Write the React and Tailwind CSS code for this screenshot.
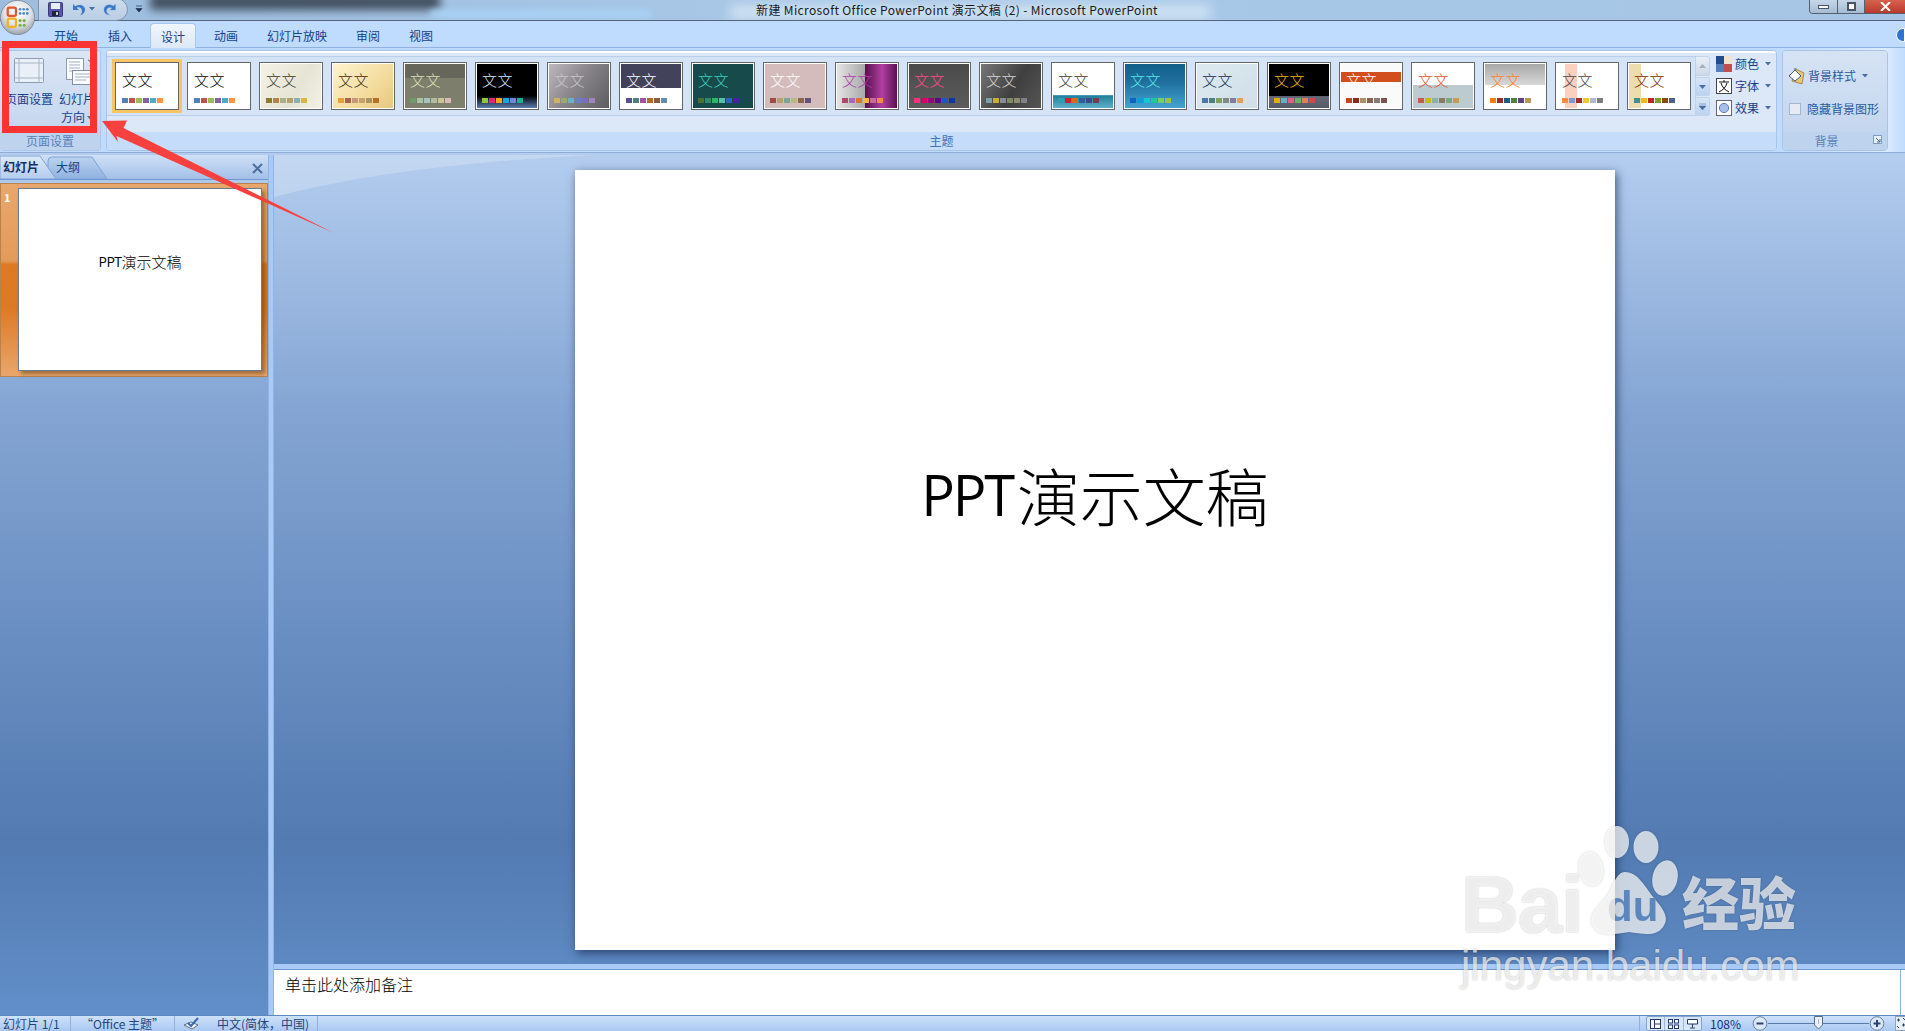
import React from "react";

const themes = [
  { bg: "bg-white", text: "text-black", sw: ["bg-[#4f81bd]", "bg-[#c0504d]", "bg-[#9bbb59]", "bg-[#8064a2]", "bg-[#4bacc6]", "bg-[#f79646]"], sel: true },
  { bg: "bg-white", text: "text-black", sw: ["bg-[#4f81bd]", "bg-[#c0504d]", "bg-[#9bbb59]", "bg-[#8064a2]", "bg-[#4bacc6]", "bg-[#f79646]"] },
  { bg: "bg-[linear-gradient(120deg,#f4f2e6_0%,#e6e4d4_60%,#f3f1e6_100%)]", text: "text-[#3a3a2a]", sw: ["bg-[#8b7d2c]", "bg-[#b5824e]", "bg-[#a9b083]", "bg-[#b3a06e]", "bg-[#8daeb5]", "bg-[#d8b54c]"] },
  { bg: "bg-[linear-gradient(135deg,#fdf3cf_0%,#f3dc9e_60%,#e9c680_100%)]", text: "text-[#3a2a10]", sw: ["bg-[#e8a12f]", "bg-[#a5644a]", "bg-[#c49a7a]", "bg-[#c9a06a]", "bg-[#a89560]", "bg-[#b87029]"] },
  { bg: "bg-[linear-gradient(180deg,#66665a_0%,#66665a_32%,#7e7e6c_32%,#7e7e6c_100%)]", text: "text-[#dfe3b7]", sw: ["bg-[#6f9a6c]", "bg-[#a8c4a2]", "bg-[#a5c4c0]", "bg-[#b5b9a0]", "bg-[#c9c494]", "bg-[#d9b8b8]"] },
  { bg: "bg-[linear-gradient(180deg,#000000_0%,#000000_72%,#5a7ab0_100%)]", text: "text-[#d5efff]", sw: ["bg-[#8dc63f]", "bg-[#e0277b]", "bg-[#f0a818]", "bg-[#1aa7d8]", "bg-[#6e86d6]", "bg-[#1fae8f]"] },
  { bg: "bg-[linear-gradient(125deg,#bdb8bc_0%,#8a878c_45%,#5e5c60_100%)]", text: "text-[#c9c5cc]", sw: ["bg-[#cdb35a]", "bg-[#9daa6a]", "bg-[#6fb0c8]", "bg-[#6880bf]", "bg-[#7a6ec0]", "bg-[#a084c0]"] },
  { bg: "bg-[linear-gradient(180deg,#42425a_0%,#42425a_55%,#ffffff_55%,#ffffff_100%)]", text: "text-white", sw: ["bg-[#59518e]", "bg-[#4e7f7f]", "bg-[#a5519c]", "bg-[#b56b2c]", "bg-[#8a5d3c]", "bg-[#5f8fb0]"] },
  { bg: "bg-[#174a4a]", text: "text-[#3fd1c0]", sw: ["bg-[#4b7030]", "bg-[#2f8a66]", "bg-[#2fb568]", "bg-[#4fc0b0]", "bg-[#2f63c0]", "bg-[#4a209f]"] },
  { bg: "bg-[#d5bcbc]", text: "text-white", sw: ["bg-[#a04a48]", "bg-[#b8a06a]", "bg-[#7ea49a]", "bg-[#b8b880]", "bg-[#8c6648]", "bg-[#644f80]"] },
  { bg: "bg-[linear-gradient(90deg,#e4e4e4_0%,#a8a8a8_47%,#5a1050_47.5%,#b040a0_75%,#5a1050_100%)]", text: "text-[#b03aa8]", sw: ["bg-[#b8446c]", "bg-[#a668ba]", "bg-[#d97330]", "bg-[#fab24a]", "bg-[#c86aa0]", "bg-[#f08c4a]"] },
  { bg: "bg-[linear-gradient(180deg,#4a4a4a_0%,#5c5c5c_100%)]", text: "text-[#ff4a88]", sw: ["bg-[#ff2f80]", "bg-[#d4006a]", "bg-[#9a0080]", "bg-[#62008a]", "bg-[#1a5ac0]", "bg-[#0a3aa0]"] },
  { bg: "bg-[linear-gradient(120deg,#777777_0%,#3f3f3f_55%,#555555_100%)]", text: "text-[#d8d8d8]", sw: ["bg-[#7aa0aa]", "bg-[#c8ad2e]", "bg-[#8a8a9c]", "bg-[#7e8a62]", "bg-[#8c8c6e]", "bg-[#808088]"] },
  { bg: "bg-[linear-gradient(180deg,#ffffff_0%,#ffffff_70%,#1f7f9a_72%,#5fb0c8_100%)]", text: "text-[#3a3a2a]", sw: ["bg-[#2e9fb0]", "bg-[#c8232c]", "bg-[#d96a1a]", "bg-[#2f5f9a]", "bg-[#3c4a8a]", "bg-[#7a3a50]"] },
  { bg: "bg-[linear-gradient(180deg,#135f8c_0%,#1d6f9d_40%,#46a3d0_100%)]", text: "text-[#5fe6e6]", sw: ["bg-[#0a66c2]", "bg-[#0f9ad8]", "bg-[#10c8d8]", "bg-[#1cc8a0]", "bg-[#7ccc66]", "bg-[#a0c040]"] },
  { bg: "bg-[linear-gradient(135deg,#dde9ef_0%,#cfdfe8_100%)]", text: "text-[#102a50]", sw: ["bg-[#4a78a8]", "bg-[#4f7d80]", "bg-[#7fa060]", "bg-[#808a88]", "bg-[#8a78a0]", "bg-[#e0a060]"] },
  { bg: "bg-[linear-gradient(180deg,#000000_0%,#000000_72%,#666a78_74%,#555a68_100%)]", text: "text-[#f5b800]", sw: ["bg-[#e8a90a]", "bg-[#5fb0c8]", "bg-[#e0607f]", "bg-[#62b06a]", "bg-[#e08050]", "bg-[#c84a4a]"] },
  { bg: "bg-[linear-gradient(180deg,#fafafa_0%,#fafafa_18%,#d24e1c_18%,#d24e1c_42%,#fafafa_42%,#fafafa_100%)]", text: "text-white", sw: ["bg-[#c04a1c]", "bg-[#8a2a1c]", "bg-[#a89068]", "bg-[#8a6250]", "bg-[#8a7a78]", "bg-[#7a5550]"] },
  { bg: "bg-[linear-gradient(180deg,#ffffff_0%,#ffffff_48%,#bccbcf_48%,#bccbcf_100%)]", text: "text-[#e05030]", sw: ["bg-[#c85a48]", "bg-[#c8b818]", "bg-[#8ab0a8]", "bg-[#8a7a68]", "bg-[#7aa878]", "bg-[#c89a58]"] },
  { bg: "bg-[linear-gradient(180deg,#a8a8a8_0%,#d8d8d8_48%,#ffffff_48%,#ffffff_100%)]", text: "text-[#ff7f2a]", sw: ["bg-[#ee7f10]", "bg-[#9a2a2a]", "bg-[#1f5a7f]", "bg-[#4f8040]", "bg-[#5f4080]", "bg-[#b89858]"] },
  { bg: "bg-[linear-gradient(90deg,#ffffff_0%,#ffffff_13%,#fbd0c0_13%,#fbd0c0_34%,#ffffff_34%,#ffffff_100%)]", text: "text-[#444444]", sw: ["bg-[#ff8a3c]", "bg-[#7a9ad0]", "bg-[#a82a20]", "bg-[#f0c830]", "bg-[#b0b8d0]", "bg-[#7f7f7f]"] },
  { bg: "bg-[linear-gradient(90deg,#ecdcae_0%,#ecdcae_20%,#ffffff_20%,#ffffff_100%)]", text: "text-[#7a2a00]", sw: ["bg-[#3f8f9a]", "bg-[#f0b818]", "bg-[#b82a2a]", "bg-[#82a030]", "bg-[#8a4a08]", "bg-[#4f5f8a]"] },
];

function ThemeThumb({ t }) {
  return (
    <div className={`relative w-[64px] h-[48px] shrink-0 border border-[#666666] bg-white p-px ${t.sel ? "ring-[3px] ring-[#f7c566]" : ""}`}>
      <div className={`relative w-full h-full overflow-hidden ${t.bg}`}>
        <div className={`absolute left-[5px] top-[7px] text-[15px] leading-[18px] tracking-[0.5px] font-light whitespace-nowrap ${t.text}`}>文文</div>
        <div className="absolute left-[5px] top-[34px] flex gap-px">
          {t.sw.map((c, i) => (
            <div key={i} className={`w-[6px] h-[5px] ${c}`} />
          ))}
        </div>
      </div>
    </div>
  );
}

function Caret({ className = "" }) {
  return (
    <svg width="6" height="4" viewBox="0 0 6 4" className={className}>
      <path d="M0 0H6L3 3.5Z" fill="#4a6fa5" />
    </svg>
  );
}

function ScrollBtn({ h, children, top }) {
  return (
    <div className={`w-[15px] ${h} flex items-center justify-center border border-[#c2d4ec] rounded-[2px] ${top ? "bg-[linear-gradient(180deg,#e8eef7,#ced9e8)]" : "bg-[linear-gradient(180deg,#d8e5f7,#bcd3f2)]"}`}>
      {children}
    </div>
  );
}

function OfficeLogo() {
  return (
    <svg width="35" height="35" viewBox="0 0 34 34" className="absolute left-0 top-0">
      <defs>
        <radialGradient id="orb" cx="50%" cy="35%" r="70%">
          <stop offset="0%" stopColor="#ffffff" />
          <stop offset="55%" stopColor="#dfe3e8" />
          <stop offset="100%" stopColor="#8f969e" />
        </radialGradient>
      </defs>
      <circle cx="17" cy="17" r="16.6" fill="url(#orb)" stroke="#7d8590" strokeWidth="0.8" />
      <rect x="7.5" y="7.5" width="8" height="8" rx="1.6" fill="none" stroke="#e4572b" strokeWidth="2.2" />
      <rect x="7.5" y="18" width="8" height="8" rx="1.6" fill="none" stroke="#f4b022" strokeWidth="2.2" />
      <g fill="#4a86c8">
        <circle cx="19.5" cy="9" r="1.3" /><circle cx="23" cy="9" r="1.3" /><circle cx="26.5" cy="9" r="1.3" />
        <circle cx="19.5" cy="13" r="1.3" /><circle cx="23" cy="13" r="1.3" /><circle cx="26.5" cy="13" r="1.3" />
      </g>
      <g fill="#77b33c">
        <circle cx="19.5" cy="20" r="1.5" /><circle cx="23.5" cy="20" r="1.5" /><circle cx="19.5" cy="24.5" r="1.5" /><circle cx="23.5" cy="24.5" r="1.5" />
      </g>
    </svg>
  );
}

function TitleBar() {
  return (
    <div className="relative z-10 h-[21px] shrink-0 border-b border-[#55657a] bg-[linear-gradient(90deg,#9dbddf_0%,#a8c7e6_40%,#a8c8e8_60%,#a6c5e4_100%)]">
      <div className="absolute inset-0 overflow-hidden">
        <div className="absolute left-[150px] -top-[6px] w-[290px] h-[16px] bg-[#303a46] blur-[5px] opacity-85" />
        <div className="absolute left-[430px] top-[10px] w-[220px] h-[8px] bg-[#a8d2f6] blur-[3px]" />
        <div className="absolute left-[730px] top-[5px] w-[480px] h-[14px] bg-[#e4eff8] blur-[6px] opacity-70" />
      </div>
      <div className="absolute left-[38px] -top-[2px] w-[90px] h-[23px] rounded-r-[14px] border border-[#7f93ad] bg-[linear-gradient(180deg,#cfdcec,#b9cde4)]" />
      <OfficeLogo />
      <svg width="15" height="15" viewBox="0 0 15 15" className="absolute left-[48px] top-[2px]">
        <rect x="0.5" y="0.5" width="14" height="14" rx="1" fill="#5a55a8" stroke="#3a3a80" />
        <rect x="3" y="1" width="9" height="6" fill="#e8eef8" />
        <rect x="4" y="9" width="7" height="5" fill="#20243c" />
        <rect x="8" y="10" width="2" height="3" fill="#c8d0e0" />
      </svg>
      <svg width="16" height="15" viewBox="0 0 16 15" className="absolute left-[70px] top-[2px]">
        <path d="M3 2V8H9L6.7 5.8C9 4.5 12 6 12 9C12 10.5 11.5 12 10 13.5C13 12.5 15 10.5 15 7.5C15 3.5 10 1.5 5.2 4.2Z" fill="#3a78c4" />
      </svg>
      <Caret className="absolute left-[89px] top-[7px]" />
      <svg width="15" height="15" viewBox="0 0 15 15" className="absolute left-[103px] top-[2px]">
        <path d="M12.5 2V8H7L9 6C7 4.7 4 5.6 3.6 8C3.3 10 4.5 12 6.5 13C3 12.6 0.8 10.4 1 7.4C1.2 3.2 6.5 1.4 10.5 4.1Z" fill="#3a78c4" stroke="#6fa0dc" strokeWidth="0.4" />
      </svg>
      <svg width="8" height="8" viewBox="0 0 8 8" className="absolute left-[135px] top-[5px]">
        <path d="M1 1H7M1 3.5H7L4 7Z" fill="#1f3350" stroke="#1f3350" strokeWidth="0.7" />
      </svg>
      <div className="relative flex justify-center pt-px pl-[9px] text-[12px] leading-[17px] text-[#1a1a1a] tracking-[0.36px] whitespace-nowrap">
        新建 Microsoft Office PowerPoint 演示文稿 (2) - Microsoft PowerPoint
      </div>
      <div className="absolute right-0 top-0 flex h-[14px] rounded-bl-[4px] border-b border-l border-[#55606e] overflow-hidden">
        <div className="w-[28px] bg-[linear-gradient(180deg,#c6d6e8,#a5bcd4)] border-r border-[#55606e] flex items-center justify-center">
          <div className="w-[11px] h-[4px] bg-white border border-[#4a5464]" />
        </div>
        <div className="w-[27px] bg-[linear-gradient(180deg,#c6d6e8,#a5bcd4)] border-r border-[#55606e] flex items-center justify-center">
          <div className="w-[9px] h-[9px] bg-white border-[2px] border-[#4a5464]" />
        </div>
        <div className="w-[40px] bg-[linear-gradient(180deg,#d8604e,#b93a2c)] flex items-center justify-center">
          <svg width="11" height="9" viewBox="0 0 11 9"><path d="M1 0L10 9M10 0L1 9" stroke="#ffffff" strokeWidth="2" /></svg>
        </div>
      </div>
    </div>
  );
}

function Tabs() {
  return (
    <div className="relative h-[27px] shrink-0 bg-[#bfdbfd] border-b border-[#8fb2e3] flex items-end pl-[54px] text-[12px] leading-[18px] text-[#15428b]">
      <div className="flex items-end gap-[29px] h-full">
        <span className="mb-[2px] mr-px">开始</span>
        <span className="mb-[2px]">插入</span>
        <span className="-mx-[11px] px-[10px] h-[25px] pt-[4px] -mb-px rounded-t-[4px] border border-b-0 border-[#a9c6ec] bg-[linear-gradient(180deg,#f0f6fd,#dce8f8)]">设计</span>
        <span className="mb-[2px]">动画</span>
        <span className="mb-[2px]">幻灯片放映</span>
        <span className="mb-[2px]">审阅</span>
        <span className="mb-[2px]">视图</span>
      </div>
      <div className="absolute right-0 top-[7px] w-[9px] h-[14px] rounded-l-full bg-[#2e74d0] border border-white" />
    </div>
  );
}

function GroupLabel({ children, dim, launcher, className = "" }) {
  return (
    <div className={`relative h-[18px] flex items-center justify-center text-[12px] leading-none ${dim ? "bg-[#bed3ee] text-[#5a80b8]" : "bg-[#c5dcfa] text-[#4671b2]"} ${className}`}>
      {children}
      {launcher && (
        <svg width="9" height="9" viewBox="0 0 9 9" className="absolute right-[5px] top-[3px]">
          <rect x="0.5" y="0.5" width="8" height="8" fill="#e8f0fa" stroke="#7f9cc4" />
          <path d="M3 3L7 7M7 4V7H4" stroke="#4a6a98" fill="none" />
        </svg>
      )}
    </div>
  );
}

function PageGroup() {
  return (
    <div className="w-[101px] shrink-0 flex flex-col h-[101px] rounded-b-[4px] rounded-tr-[4px] border border-l-0 border-[#afc8e6] bg-[#c9daef] overflow-hidden">
      <div className="relative h-[81px] bg-[linear-gradient(180deg,#dbe6f5,#c4d6ee)] flex pt-[7px] text-[12px] leading-[18px] text-[#15428b]">
        <div className="w-[58px] flex flex-col items-center">
          <svg width="30" height="25" viewBox="0 0 30 25">
            <rect x="0.5" y="0.5" width="29" height="24" rx="1" fill="#eaf0f8" stroke="#8c9cb0" />
            <path d="M0.5 5H29.5M0.5 20H29.5M5 0.5V24.5M25 0.5V24.5" stroke="#a8b6c8" />
          </svg>
          <span className="mt-[7px] whitespace-nowrap">页面设置</span>
        </div>
        <div className="w-[38px] flex flex-col items-center">
          <svg width="28" height="27" viewBox="0 0 28 27" className="ml-[6px]">
            <rect x="0.5" y="0.5" width="17" height="21" fill="#fafcff" stroke="#8c9cb0" />
            <path d="M3 4H14M3 7H14M3 10H14M3 13H14" stroke="#9fb0c4" />
            <rect x="6.5" y="12.5" width="21" height="14" fill="#fafcff" stroke="#7f90a6" />
            <path d="M9 16H25M9 19H25M9 22H20" stroke="#9fb0c4" />
            <path d="M22 2C25 3 25.5 6 25 9M24 7.5L25 10L26.5 8" stroke="#4a5a70" fill="none" />
          </svg>
          <span className="mt-[5px] whitespace-nowrap">幻灯片</span>
          <span className="whitespace-nowrap -ml-[8px]">方向</span>
        </div>
        <Caret className="absolute left-[87px] top-[65px]" />
      </div>
      <GroupLabel dim>页面设置</GroupLabel>
    </div>
  );
}

function ThemeGroup() {
  return (
    <div className="w-[1671px] shrink-0 flex flex-col h-[101px] rounded-[4px] border border-[#a9c4e6] overflow-hidden bg-[#dce7f7]">
      <div className="h-[81px] flex items-start pt-[3px] border-t-2 border-white bg-[#dce7f7]">
        <div className="flex items-center h-[60px] pl-[8px] pr-[4px] gap-[8px] border-y border-r border-[#b9cfe9] bg-[#d5e3f6]">
          {themes.map((t, i) => (
            <ThemeThumb key={i} t={t} />
          ))}
        </div>
        <div className="flex flex-col gap-[1px] -ml-px">
          <ScrollBtn h="h-[20px]" top><svg width="7" height="4" viewBox="0 0 7 4"><path d="M0 4H7L3.5 0Z" fill="#a4aebc" /></svg></ScrollBtn>
          <ScrollBtn h="h-[19px]"><svg width="7" height="4" viewBox="0 0 7 4"><path d="M0 0H7L3.5 4Z" fill="#4a6fa5" /></svg></ScrollBtn>
          <ScrollBtn h="h-[19px]"><svg width="7" height="7" viewBox="0 0 7 7"><path d="M0 1H7M0 3H7L3.5 7Z" fill="#4a6fa5" stroke="#4a6fa5" strokeWidth="0.5" /></svg></ScrollBtn>
        </div>
        <div className="ml-[6px] flex flex-col gap-[6px] text-[12px] leading-[16px] text-[#15428b]">
          <div className="flex items-center gap-[3px]">
            <svg width="16" height="16" viewBox="0 0 16 16">
              <rect width="16" height="16" fill="#1f4c8f" />
              <rect x="8" width="8" height="8" fill="#f0e4d0" />
              <rect y="8" width="8" height="8" fill="#4f81bd" />
              <rect x="8" y="8" width="8" height="8" fill="#c0504d" />
            </svg>
            <span>颜色</span><Caret className="ml-[3px]" />
          </div>
          <div className="flex items-center gap-[3px]">
            <svg width="16" height="16" viewBox="0 0 16 16">
              <rect x="0.5" y="0.5" width="15" height="15" fill="#fff" stroke="#444" />
              <path d="M8 2V4M3 4H13M5 5C6 9 9 12 13 14M11 5C10 9 7 12 3 14" fill="none" stroke="#111" />
            </svg>
            <span>字体</span><Caret className="ml-[3px]" />
          </div>
          <div className="flex items-center gap-[3px]">
            <svg width="16" height="16" viewBox="0 0 16 16">
              <rect x="0.5" y="0.5" width="15" height="15" fill="#fff" stroke="#667" />
              <circle cx="8" cy="8" r="4.6" fill="#a8c0ea" stroke="#5a7db8" />
            </svg>
            <span>效果</span><Caret className="ml-[3px]" />
          </div>
        </div>
      </div>
      <GroupLabel>主题</GroupLabel>
    </div>
  );
}

function BackgroundGroup() {
  return (
    <div className="w-[106px] shrink-0 flex flex-col h-[101px] rounded-[4px] border border-[#a9c4e6] overflow-hidden">
      <div className="h-[81px] bg-[linear-gradient(180deg,#d6e3f5,#c4d6ee)] flex flex-col pl-[5px] pt-[16px] gap-[15px] text-[12px] leading-[18px] text-[#2a5aa0]">
        <div className="flex items-center gap-[3px]">
          <svg width="17" height="17" viewBox="0 0 17 17">
            <path d="M8 1L16 5L14 16L4 13Z" fill="#e8c878" stroke="#8a6a2a" strokeWidth="0.7" />
            <path d="M1 8L7 2L13 8L7 13Z" fill="#fff" stroke="#3a5a8a" />
            <path d="M7 2V0" stroke="#3a5a8a" />
          </svg>
          <span className="whitespace-nowrap">背景样式</span><Caret className="ml-[3px]" />
        </div>
        <div className="flex items-center gap-[6px] pl-px">
          <div className="w-[12px] h-[12px] border border-[#9fb6d4] bg-[#e6ebf2]" />
          <span className="whitespace-nowrap">隐藏背景图形</span>
        </div>
      </div>
      <GroupLabel dim launcher className="pr-[17px]">背景</GroupLabel>
    </div>
  );
}

function Ribbon() {
  return (
    <div className="h-[105px] shrink-0 flex gap-[5px] pt-[2px] bg-[linear-gradient(90deg,#bfdbfd_0%,#bfdbfd_94%,#dcecfd_99%,#bfdbfd_100%)] border-b border-[#8fadd6]">
      <PageGroup />
      <ThemeGroup />
      <BackgroundGroup />
    </div>
  );
}

function LeftPanel() {
  return (
    <div className="w-[268px] shrink-0 flex flex-col">
      <div className="relative h-[25px] border-b border-[#6f98cf] bg-[linear-gradient(180deg,#cfe0f6,#a3c0e8)] text-[12px] leading-[18px] text-[#15428b]">
        <svg width="110" height="24" viewBox="0 0 110 24" className="absolute left-0 top-0">
          <defs>
            <linearGradient id="tabA" x1="0" y1="0" x2="0" y2="1"><stop offset="0%" stopColor="#bcd2ef" /><stop offset="100%" stopColor="#8fb2e0" /></linearGradient>
            <linearGradient id="tabB" x1="0" y1="0" x2="0" y2="1"><stop offset="0%" stopColor="#dce9f9" /><stop offset="100%" stopColor="#b4ccee" /></linearGradient>
          </defs>
          <path d="M48 24V6Q48 2 52 2H92L107 24Z" fill="url(#tabA)" stroke="#7fa4d4" />
          <path d="M0 1H40L56 24H0Z" fill="url(#tabB)" stroke="#7fa4d4" />
        </svg>
        <span className="absolute left-[3px] top-[3px] font-bold text-[#10306a]">幻灯片</span>
        <span className="absolute left-[56px] top-[3px]">大纲</span>
        <svg width="11" height="11" viewBox="0 0 11 11" className="absolute left-[252px] top-[8px]">
          <path d="M1 1L10 10M10 1L1 10" stroke="#4d6f9f" strokeWidth="2" />
        </svg>
      </div>
      <div className="relative h-[194px] mt-[3px] border border-[#b9824a] bg-[linear-gradient(180deg,#e8a76d_0%,#e39b5a_40%,#dd7922_42%,#dd7a25_65%,#e9a76d_100%)] flex pl-[17px] pt-[4px]">
        <span className="absolute left-[3px] top-[5px] text-[11px] leading-[16px] font-bold text-white">1</span>
        <div className="w-[244px] h-[183px] bg-white border border-[#6b7d96] shadow-[3px_3px_4px_rgba(70,40,0,0.45)] flex items-start justify-center pt-[63px] text-[15px] leading-[20px] text-black font-light">
          <span className="text-[14px] tracking-[-0.6px] font-['Open_Sans',sans-serif] font-normal">PPT</span>演示文稿
        </div>
      </div>
    </div>
  );
}

function MainArea() {
  return (
    <div className="flex-1 min-w-0 flex flex-col">
      <div className="relative flex-1 min-h-0 overflow-hidden">
        <svg width="340" height="45" viewBox="0 0 340 45" className="absolute left-0 top-0">
          <path d="M0 0H320C200 6 90 18 0 42Z" fill="#ffffff" fillOpacity="0.22" />
        </svg>
        <div className="relative ml-[301px] mt-[15px] w-[1040px] h-[780px] bg-white shadow-[2px_3px_9px_rgba(20,40,80,0.7)] flex justify-center pt-[289px]">
          <div className="flex items-center h-[70px] text-[63px] leading-[70px] text-black font-extralight">
            <span className="text-[56px] tracking-[-2.2px] mr-[4px] font-['Open_Sans',sans-serif] font-normal">PPT</span>
            <span>演示文稿</span>
          </div>
        </div>
      </div>
      <div className="h-[5px] shrink-0 bg-[#a9caf7]" />
      <div className="relative h-[46px] shrink-0 bg-white border-t border-[#6f98cf] pl-[11px] pt-[2px] text-[16px] leading-[24px] text-black font-light">
        单击此处添加备注
        <div className="absolute right-[4px] top-0 bottom-0 w-[1px] bg-[#8fb2e3]" />
      </div>
    </div>
  );
}

function StatusBar() {
  const sep = "w-px h-full bg-[#8fb0dc]";
  return (
    <div className="h-[16px] shrink-0 flex items-center border-t border-[#5e88c0] bg-[linear-gradient(180deg,#cfe1fa,#a9c8f2)] text-[12px] leading-[15px] text-[#24467c] overflow-hidden whitespace-nowrap">
      <span className="ml-[3px] w-[67px]">幻灯片 1/1</span>
      <div className={sep} />
      <span className="ml-[10px] w-[93px]">“Office 主题”</span>
      <div className={sep} />
      <svg width="17" height="14" viewBox="0 0 17 14" className="ml-[8px]">
        <path d="M1 8L8 5L15 8L9 12Z" fill="#f4f6fa" stroke="#5d6f88" />
        <path d="M5 6L8 9L15 1" fill="none" stroke="#3a6aaa" strokeWidth="2" />
      </svg>
      <span className="ml-[17px] w-[100px]">中文(简体，中国)</span>
      <div className={sep} />
      <div className="flex-1" />
      <div className={sep} />
      <div className="ml-[6px] flex h-[15px] w-[56px] rounded-[2px] border border-[#86a4cc] bg-[#d7e5f8] overflow-hidden">
        <div className="flex-1 flex items-center justify-center border-r border-[#9fb8d8]">
          <svg width="11" height="10" viewBox="0 0 11 10"><rect x="0.5" y="0.5" width="10" height="9" fill="#fff" stroke="#243a66" /><path d="M4.5 0.5V9.5M4.5 5H10.5" stroke="#243a66" /></svg>
        </div>
        <div className="flex-1 flex items-center justify-center border-r border-[#9fb8d8]">
          <svg width="11" height="10" viewBox="0 0 11 10"><g fill="#fff" stroke="#243a66"><rect x="0.5" y="0.5" width="4" height="3.5" /><rect x="6.5" y="0.5" width="4" height="3.5" /><rect x="0.5" y="6" width="4" height="3.5" /><rect x="6.5" y="6" width="4" height="3.5" /></g></svg>
        </div>
        <div className="flex-1 flex items-center justify-center">
          <svg width="11" height="10" viewBox="0 0 11 10"><path d="M0.5 0.5H10.5V5H0.5ZM5.5 5V8.5M3 9H8" fill="#fff" stroke="#243a66" /></svg>
        </div>
      </div>
      <span className="ml-[8px] w-[33px] text-[#16307c]">108%</span>
      <svg width="16" height="15" viewBox="0 0 16 15" className="ml-[9px]"><circle cx="8" cy="7.5" r="6.8" fill="#dce8f8" stroke="#6b7f9c" /><path d="M4.5 7.5H11.5" stroke="#2a4470" strokeWidth="2" /></svg>
      <div className="relative w-[101px] h-[15px] flex items-center">
        <div className="w-full h-px bg-[#5a7aa8]" />
        <svg width="9" height="14" viewBox="0 0 9 14" className="absolute left-[46px] top-0"><path d="M0.5 0.5H8.5V9L4.5 13L0.5 9Z" fill="#eaf1fa" stroke="#56708f" /><path d="M4.5 3V8" stroke="#a9b8cc" /></svg>
      </div>
      <svg width="16" height="15" viewBox="0 0 16 15"><circle cx="8" cy="7.5" r="6.8" fill="#dce8f8" stroke="#6b7f9c" /><path d="M4.5 7.5H11.5M8 4V11" stroke="#2a4470" strokeWidth="2" /></svg>
      <svg width="10" height="15" viewBox="0 0 10 15" className="ml-[10px]"><rect x="0.5" y="0.5" width="12" height="14" fill="#e8f0fa" stroke="#8ca4c4" /><path d="M2 4H5M3.5 2.5V5.5M7 9H10M8.5 7.5V10.5M2 10L4 12M8 2L10 4" stroke="#33415a" /></svg>
    </div>
  );
}

function Annotations() {
  return (
    <>
      <div className="absolute z-20 left-[2px] top-[41px] w-[95px] h-[92px] border-[7px] border-[#fb3333] pointer-events-none" />
      <svg width="340" height="240" viewBox="0 0 340 240" className="absolute z-20 left-0 top-0 pointer-events-none">
        <path d="M102 121L127 120.5L123.5 128L334 233L116.5 136L118 142Z" fill="#f8413f" />
      </svg>
    </>
  );
}

function Watermark() {
  const glow = "[text-shadow:0_0_2px_rgba(0,0,0,0.28)]";
  return (
    <div className="absolute z-20 left-[1455px] top-[825px] w-[360px] h-[165px] pointer-events-none">
      <svg width="360" height="165" viewBox="0 0 360 165" className="absolute left-0 top-0 drop-shadow-[0_0_1.5px_rgba(0,0,0,0.25)]">
        <g fill="#ffffff" fillOpacity="0.72">
          <ellipse cx="162" cy="17" rx="12" ry="16" />
          <ellipse cx="191" cy="22" rx="12.5" ry="16" />
          <ellipse cx="210" cy="53" rx="12.5" ry="18" transform="rotate(12 210 53)" />
          <ellipse cx="136" cy="44" rx="12" ry="17" transform="rotate(-10 136 44)" />
          <path d="M170 47C183 47 190 62 199 73C208 84 215 92 208 102C201 112 188 109 174 107C160 109 146 112 139 103C132 94 141 83 150 74C157 66 160 47 170 47Z" />
        </g>
      </svg>
      <span className={`absolute left-[6px] top-[34px] text-[80px] leading-[92px] font-bold font-['Liberation_Sans',sans-serif] tracking-[-1px] text-white/75 ${glow}`}>Bai</span>
      <span className="absolute left-[152px] top-[58px] text-[42px] leading-[48px] font-bold font-['Liberation_Sans',sans-serif] text-transparent bg-clip-text bg-[linear-gradient(90deg,#dedede_0px,#dedede_8px,#5c86bc_8px,#5c86bc_100%)]">du</span>
      <span className={`absolute left-[227px] top-[40px] text-[57px] leading-[70px] font-black text-white/70 whitespace-nowrap ${glow}`}>经验</span>
      <span className={`absolute left-[6px] top-[117px] text-[42px] leading-[48px] font-['Liberation_Sans',sans-serif] text-white/70 whitespace-nowrap ${glow}`}>jingyan.baidu.com</span>
    </div>
  );
}

export default function App() {
  return (
    <div className="relative w-[1905px] h-[1031px] overflow-hidden flex flex-col bg-[#bfdbfd] font-['Noto_Sans_CJK_SC','Noto_Sans',sans-serif]">
      <TitleBar />
      <Tabs />
      <Ribbon />
      <div className="h-[862px] shrink-0 flex flex-col bg-[linear-gradient(180deg,#b4cdef_0%,#84a5d3_30%,#6a8fc2_55%,#537bb2_80%,#5a84bc_90%,#628fca_100%)]">
        <div className="flex-1 min-h-0 flex pt-[2px]">
          <LeftPanel />
          <div className="w-[6px] shrink-0 bg-[#a9caf7] border-x border-[#8fb4e6]" />
          <MainArea />
        </div>
      </div>
      <StatusBar />
      <Annotations />
      <Watermark />
    </div>
  );
}
